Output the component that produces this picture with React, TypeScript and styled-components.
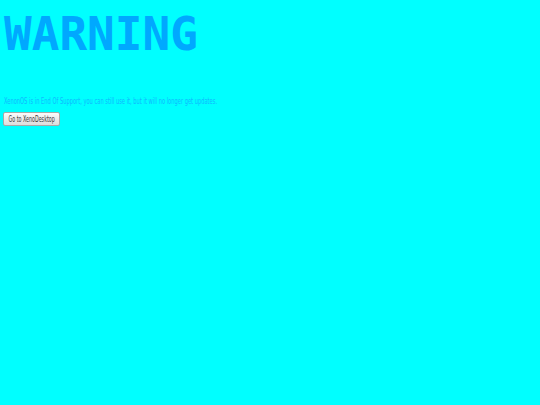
import React from "react";
import styled, { createGlobalStyle } from "styled-components";

const Global = createGlobalStyle`
  html, body { margin: 0; padding: 0; background: #00ffff; }
  body { font-family: "DejaVu Sans", sans-serif; }
`;

const Page = styled.div`
  display: flex;
  flex-direction: column;
  align-items: flex-start;
  padding: 4px 4px 4px 3px;
  min-height: 405px;
  box-sizing: border-box;
  background: #00ffff;
`;

const Title = styled.h1`
  margin: 4px 0 0 1px;
  font-family: "DejaVu Sans Mono", monospace;
  font-weight: bold;
  font-size: 46px;
  line-height: 52px;
  color: #00a8ff;
`;

const Notice = styled.p`
  margin: 36px 0 0 1px;
  font-family: "DejaVu Sans", sans-serif;
  font-size: 9px;
  line-height: 11px;
  color: #0fb8ff;
  white-space: nowrap;
  transform: scaleX(0.57);
  transform-origin: left center;
`;

const Button = styled.button`
  margin-top: 5px;
  width: 57px;
  height: 14px;
  padding: 0;
  display: flex;
  align-items: center;
  justify-content: center;
  overflow: visible;
  background: linear-gradient(#fbfbfb, #dcdcdc);
  border: 1px solid #a8a8a8;
  border-radius: 2px;
`;

const Label = styled.span`
  display: inline-block;
  white-space: nowrap;
  font-family: "DejaVu Sans", sans-serif;
  font-size: 8px;
  color: #3a3a3a;
  transform: scaleX(0.6);
`;

export default function App() {
  return (
    <>
      <Global />
      <Page>
        <Title>WARNING</Title>
        <Notice>XenonOS is in End Of Support, you can still use it, but it will no longer get updates.</Notice>
        <Button>
          <Label>Go to XenoDesktop</Label>
        </Button>
      </Page>
    </>
  );
}
